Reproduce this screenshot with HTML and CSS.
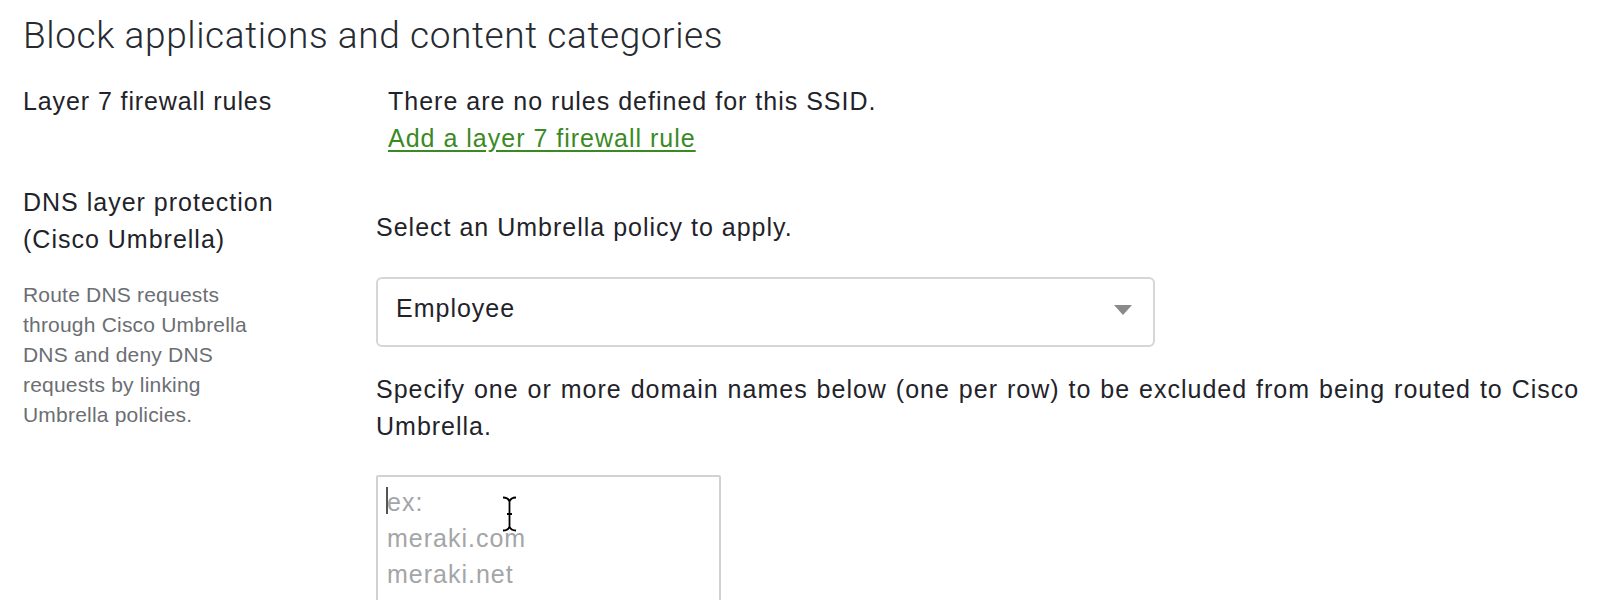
FILE: index.html
```html
<!DOCTYPE html>
<html lang="en">
<head>
    <meta charset="UTF-8">
    <title>Block applications and content categories</title>
    <link rel="stylesheet" href="styles.css">
</head>
<body>
    <div class="section">
        <h2 class="section-title">Block applications and content categories</h2>

        <!-- Layer 7 -->
        <div class="row row-l7">
            <div class="label">Layer 7 firewall rules</div>
            <div class="field">
                <div>There are no rules defined for this SSID.</div>
                <a href="#" class="add-link">Add a layer 7 firewall rule</a>
            </div>
        </div>

        <!-- Umbrella -->
        <div class="row row-dns">
            <div class="label">
                DNS layer protection<br>(Cisco Umbrella)
                <p class="hint">Route DNS requests through Cisco Umbrella DNS and deny DNS requests by linking Umbrella policies.</p>
            </div>
            <div class="field">
                <p class="intro">Select an Umbrella policy to apply.</p>
                <div class="select">
                    <span>Employee</span>
                    <span class="caret-down"></span>
                </div>
                <p class="excl">Specify one or more domain names below (one per row) to be excluded from being routed to Cisco Umbrella.</p>
                <div class="textarea-wrap">
                    <textarea class="domains" placeholder="ex:&#10;meraki.com&#10;meraki.net"></textarea>
                    <span class="text-caret"></span>
                    <svg class="ibeam" width="15" height="36" viewBox="0 0 15 36">
                        <path d="M1 1.5 C4.5 1.5 6.5 2.5 7.5 5.5 C8.5 2.5 10.5 1.5 14 1.5 M7.5 5.5 V30.5 M1 34.5 C4.5 34.5 6.5 33.5 7.5 30.5 C8.5 33.5 10.5 34.5 14 34.5 M5 18 H10" fill="none" stroke="#fff" stroke-width="3.4"/>
                        <path d="M1 1.5 C4.5 1.5 6.5 2.5 7.5 5.5 C8.5 2.5 10.5 1.5 14 1.5 M7.5 5.5 V30.5 M1 34.5 C4.5 34.5 6.5 33.5 7.5 30.5 C8.5 33.5 10.5 34.5 14 34.5 M5 18 H10" fill="none" stroke="#000" stroke-width="1.8"/>
                    </svg>
                </div>
            </div>
        </div>
    </div>
</body>
</html>
```

FILE: styles.css
```css
* {
    margin: 0;
    padding: 0;
    box-sizing: border-box;
}

body {
    background: #fff;
    color: #1f232a;
    font-family: 'Liberation Sans', Arial, sans-serif;
    font-size: 25px;
    letter-spacing: 1px;
    overflow: hidden;
}

.section {
    padding: 14px 0 0 23px;
}

.section-title {
    font-family: 'Roboto', 'Liberation Sans', sans-serif;
    font-weight: 300;
    font-size: 37px;
    letter-spacing: 0.6px;
    line-height: 44px;
    color: #262a31;
}

.row {
    display: grid;
    grid-template-columns: 353px 1fr;
    line-height: 37px;
}

.row-l7 {
    margin-top: 25px;
}

.row-l7 .label {
    letter-spacing: 0.9px;
}

.row-l7 .field {
    padding-left: 12px;
}

.add-link {
    color: #3a8a24;
    text-decoration: underline;
    text-underline-offset: 3px;
}

.row-dns {
    margin-top: 27px;
}

.hint {
    margin-top: 22px;
    width: 240px;
    font-size: 21px;
    letter-spacing: 0.2px;
    line-height: 30px;
    color: #6b6e73;
}

.row-dns .field {
    padding-top: 25px;
}

.select {
    margin-top: 31px;
    width: 779px;
    height: 70px;
    border: 2px solid #d6d6d6;
    border-radius: 6px;
    display: flex;
    align-items: center;
    justify-content: space-between;
    padding: 0 21px 8px 18px;
}

.caret-down {
    width: 0;
    height: 0;
    margin-top: 4px;
    border-left: 9px solid transparent;
    border-right: 9px solid transparent;
    border-top: 10px solid #8a8a8a;
}

.excl {
    margin-top: 24px;
    word-spacing: 1px;
}

.textarea-wrap {
    position: relative;
    margin-top: 30px;
    width: 345px;
}

.domains {
    display: block;
    width: 345px;
    height: 190px;
    border: 2px solid #d2d2d2;
    border-radius: 2px;
    padding: 7px 9px;
    font-family: 'Liberation Sans', Arial, sans-serif;
    font-size: 25px;
    letter-spacing: 1px;
    line-height: 36px;
    resize: none;
    outline: none;
}

.domains::placeholder {
    color: #a3a5a8;
}

.text-caret {
    position: absolute;
    left: 10px;
    top: 12px;
    width: 2px;
    height: 27px;
    background: #555;
}

.ibeam {
    position: absolute;
    left: 126px;
    top: 21px;
}
```
